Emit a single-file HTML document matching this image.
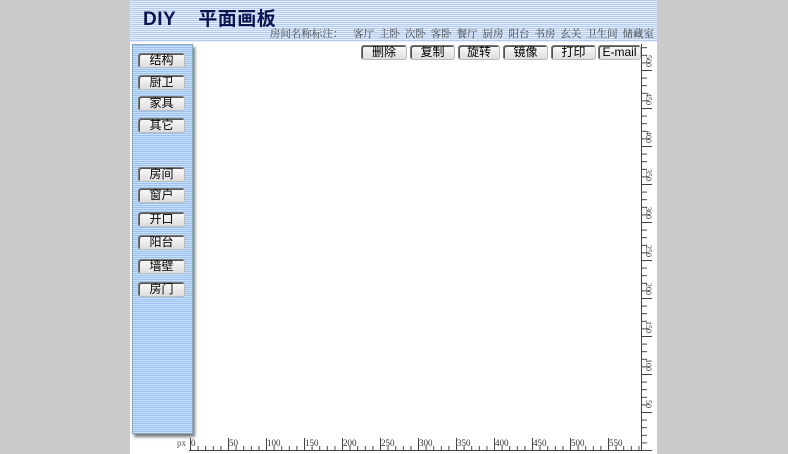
<!DOCTYPE html>
<html><head><meta charset="utf-8"><style>
*{margin:0;padding:0;box-sizing:border-box}
body{width:788px;height:454px;background:#cbcbcb;position:relative;overflow:hidden;font-family:"Liberation Sans","Noto Sans CJK SC",sans-serif}
#main{position:absolute;left:130px;top:0;width:527px;height:454px;background:#fff}
#hdr{position:absolute;left:0;top:0;width:527px;height:42px;background:repeating-linear-gradient(#b4cdee 0 1px,#e4edf9 1px 2px)}
#title{position:absolute;left:13px;top:4px;font-size:19px;font-weight:bold;color:#0a1650;letter-spacing:0.5px}
#title span{margin-left:22px}
#rooms{position:absolute;right:3px;top:26px;font-family:"Noto Serif CJK SC",serif;font-size:10.5px;color:#444;white-space:nowrap;word-spacing:2.2px}
#side{position:absolute;left:2px;top:44px;width:61px;height:390px;background:repeating-linear-gradient(#9cc2ee 0 1px,#c8defa 1px 2px);border:1px solid #8ab;box-shadow:2px 3px 3px #777}
.b{position:absolute;height:15px;background:linear-gradient(#fafafa,#ddd);border:1px solid #777;border-right-color:#bbb;border-bottom-color:#bbb;border-radius:3px;font-size:12px;line-height:13px;text-align:center;color:#000;box-shadow:inset 1px 1px 0 #555}
#side .b{left:5px;width:47px}
</style></head><body>
<div id="main">
<div id="hdr"><div id="title">DIY<span>平面画板</span></div>
<div id="rooms">房间名称标注： &nbsp;客厅 主卧 次卧 客卧 餐厅 厨房 阳台 书房 玄关 卫生间 储藏室</div></div>
<div id="side">
<div class="b" style="top:8px">结构</div>
<div class="b" style="top:30px">厨卫</div>
<div class="b" style="top:51px">家具</div>
<div class="b" style="top:73px">其它</div>
<div class="b" style="top:122px">房间</div>
<div class="b" style="top:143px">窗户</div>
<div class="b" style="top:167px">开口</div>
<div class="b" style="top:190px">阳台</div>
<div class="b" style="top:214px">墙壁</div>
<div class="b" style="top:237px">房门</div>
</div>
<div class="b" style="left:231px;top:45px;width:46px">删除</div>
<div class="b" style="left:280px;top:45px;width:45px">复制</div>
<div class="b" style="left:328px;top:45px;width:42px">旋转</div>
<div class="b" style="left:373px;top:45px;width:45px">镜像</div>
<div class="b" style="left:421px;top:45px;width:45px">打印</div>
<div class="b" style="left:468px;top:45px;width:43px">E-mail</div>
<svg width="527" height="454" style="position:absolute;left:0;top:0" font-family="Liberation Serif,serif" font-size="9" fill="#333">
<defs>
<pattern id="hm" x="60" y="0" width="7.6" height="454" patternUnits="userSpaceOnUse"><rect x="0" y="446" width="1" height="5" fill="#444"/></pattern>
<pattern id="hM" x="60" y="0" width="38" height="454" patternUnits="userSpaceOnUse"><rect x="0" y="438" width="1" height="13" fill="#444"/></pattern>
<pattern id="vm" x="0" y="450" width="527" height="7.6" patternUnits="userSpaceOnUse"><rect x="512" y="0" width="5" height="1" fill="#444"/></pattern>
<pattern id="vM" x="0" y="450" width="527" height="38" patternUnits="userSpaceOnUse"><rect x="512" y="0" width="10" height="1" fill="#444"/></pattern>
</defs>
<text x="47" y="446" fill="#555">px</text>
<rect x="59" y="450" width="453" height="1" fill="#444"/>
<rect x="60" y="436" width="452" height="15" fill="url(#hm)"/>
<rect x="60" y="436" width="452" height="15" fill="url(#hM)"/>
<rect x="511" y="44" width="1" height="407" fill="#444"/>
<rect x="512" y="46" width="12" height="405" fill="url(#vm)"/>
<rect x="512" y="46" width="12" height="405" fill="url(#vM)"/>
<g>
<text x="61" y="446">0</text><text x="99" y="446">50</text><text x="137" y="446">100</text><text x="175" y="446">150</text><text x="213" y="446">200</text><text x="251" y="446">250</text><text x="289" y="446">300</text><text x="327" y="446">350</text><text x="365" y="446">400</text><text x="403" y="446">450</text><text x="441" y="446">500</text><text x="479" y="446">550</text>
</g>
<g font-size="8">
<text transform="translate(516,400) rotate(90)">50</text>
<text transform="translate(516,359) rotate(90)">100</text>
<text transform="translate(516,321) rotate(90)">150</text>
<text transform="translate(516,283) rotate(90)">200</text>
<text transform="translate(516,245) rotate(90)">250</text>
<text transform="translate(516,207) rotate(90)">300</text>
<text transform="translate(516,169) rotate(90)">350</text>
<text transform="translate(516,131) rotate(90)">400</text>
<text transform="translate(516,93) rotate(90)">450</text>
<text transform="translate(516,55) rotate(90)">500</text>
</g>
</svg>
</div>
</body></html>
